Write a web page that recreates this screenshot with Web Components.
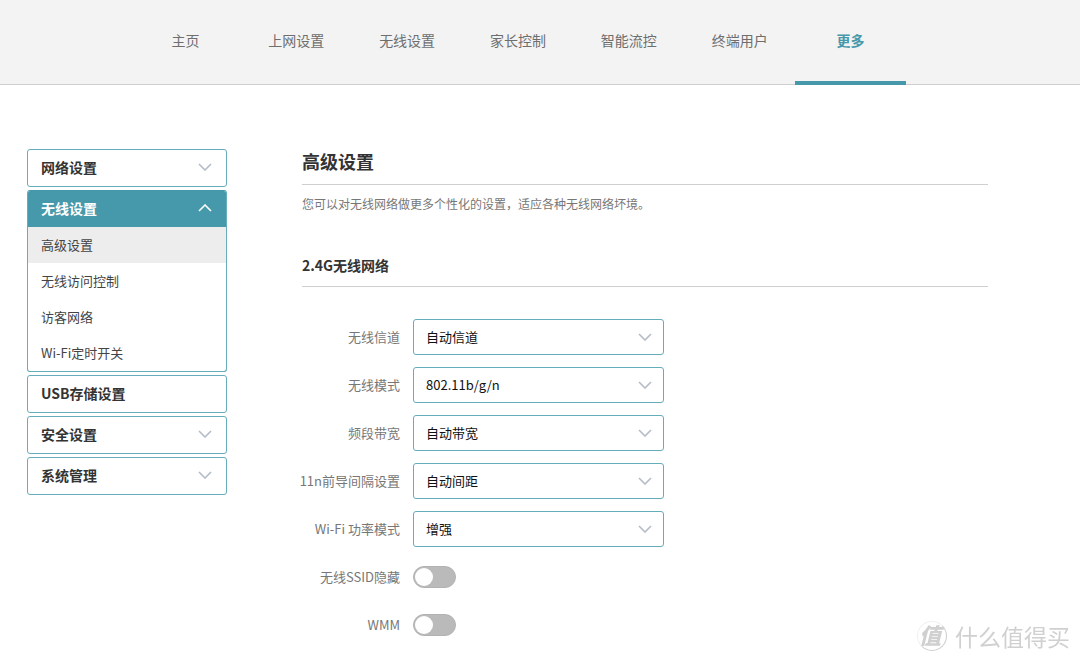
<!DOCTYPE html>
<html lang="zh-CN">
<head>
<meta charset="utf-8">
<meta name="viewport" content="width=device-width, initial-scale=1">
<title>高级设置</title>
<style>
:root {
  --accent: #4698ab;
  --edge: #66adbb;
  --rule: #cfcfcf;
  --chevron: #b4bcc6;
}
body {
  margin: 0;
  background: #fff;
  color: #333;
  font: 13px/20px "Noto Sans CJK SC", "Noto Sans", sans-serif;
}
</style>
</head>
<body>
<router-app></router-app>
<script>
const chevron = (flip) => `<svg class="chevron" width="14" height="8" viewBox="0 0 14 8" fill="none" aria-hidden="true"><path d="${flip ? 'M1 7L7 1L13 7' : 'M1 1L7 7L13 1'}" stroke="currentColor" stroke-width="1.6"/></svg>`;

class BaseElement extends HTMLElement {
  connectedCallback() {
    if (!this.shadowRoot) {
      this.attachShadow({ mode: 'open' }).innerHTML = `<style>*{box-sizing:border-box}${this.css()}</style>${this.html()}`;
    }
  }
}

class NavTab extends BaseElement {
  css() { return `
    :host { display: block; }
    a { display: flex; justify-content: center; height: 85px; padding-top: 30px; color: #6e6e6e; font-size: 14px; text-decoration: none; border-bottom: 4px solid transparent; white-space: nowrap; }
    :host([active]) a { color: var(--accent); font-weight: bold; border-color: var(--accent); }`; }
  html() { return `<a href="#"><slot></slot></a>`; }
}

class TopNav extends BaseElement {
  css() { return `
    :host { display: block; background: linear-gradient(var(--rule), var(--rule)) bottom / 100% 1px no-repeat #f3f3f3; }
    nav { display: grid; grid-template-columns: repeat(7, 1fr); margin: 0 174px 0 130px; }`; }
  html() { return `<nav><slot></slot></nav>`; }
}

class MenuGroup extends BaseElement {
  css() { return `
    :host { display: block; border: 1px solid var(--edge); border-radius: 3px; overflow: hidden; }
    button { display: flex; align-items: center; justify-content: space-between; width: 100%; height: 36px; padding: 0 14px 2px 13px; border: 0; background: none; color: #333; font: bold 14px/20px "Noto Sans CJK SC", sans-serif; }
    .chevron { color: var(--chevron); }
    :host([open]) { border-top-color: var(--accent); }
    :host([open]) button { background: var(--accent); color: #fff; }
    :host([open]) .chevron { color: #fff; }`; }
  html() {
    const open = this.hasAttribute('open');
    return `<button type="button"${this.hasAttribute('plain') ? '' : ` aria-expanded="${open}"`}>${this.getAttribute('label')}${this.hasAttribute('plain') ? '' : chevron(open)}</button><slot></slot>`;
  }
}

class MenuItem extends BaseElement {
  css() { return `
    :host { display: block; }
    a { display: block; padding: 8px 13px; color: #444; text-decoration: none; }
    :host([active]) a { background: #ededed; }`; }
  html() { return `<a href="#"><slot></slot></a>`; }
}

class SideMenu extends BaseElement {
  css() { return `
    :host { display: block; }
    nav { display: flex; flex-direction: column; gap: 3px; }`; }
  html() { return `<nav><slot></slot></nav>`; }
}

const rowCss = `
  :host { display: grid; grid-template-columns: 98px minmax(0, 251px); column-gap: 13px; align-items: center; min-height: 36px; }
  label { color: #777; white-space: nowrap; justify-self: end; }`;

class SelectRow extends BaseElement {
  css() { return `${rowCss}
    .box { display: grid; align-items: center; }
    select, .chevron { grid-area: 1 / 1; }
    select { appearance: none; width: 100%; height: 36px; padding: 0 32px 0 12px; border: 1px solid var(--edge); border-radius: 3px; background: #fff; color: #111; font: 13px/20px "Noto Sans CJK SC", sans-serif; }
    .chevron { justify-self: end; margin-right: 12px; color: var(--chevron); pointer-events: none; }`; }
  html() { return `<label for="field">${this.getAttribute('label')}</label><div class="box"><select id="field"><option>${this.getAttribute('value')}</option></select>${chevron(false)}</div>`; }
}

class SwitchRow extends BaseElement {
  css() { return `${rowCss}
    input { appearance: none; display: flex; align-items: center; width: 43px; height: 22px; margin: 0; padding: 0 1px; border: 1px solid #b2b2b2; border-radius: 11px; background: #bababa; }
    input::before { content: ""; width: 18px; height: 18px; border-radius: 50%; background: #fff; }
    input:checked { background: var(--accent); border-color: var(--accent); justify-content: flex-end; }`; }
  html() { return `<label for="field">${this.getAttribute('label')}</label><input id="field" type="checkbox" role="switch">`; }
}

class SettingsPanel extends BaseElement {
  css() { return `
    :host { display: block; }
    h1, h2 { margin: 0; border-bottom: 1px solid var(--rule); color: #333; }
    h1 { font-size: 18px; line-height: 24px; padding-bottom: 11px; }
    p { margin: 9px 0 41px; color: #777; font-size: 12px; }
    h2 { font-size: 14px; line-height: 20px; padding-bottom: 11px; }
    form { display: flex; flex-direction: column; gap: 12px; margin-top: 32px; }`; }
  html() { return `
    <h1>高级设置</h1>
    <p>您可以对无线网络做更多个性化的设置，适应各种无线网络坏境。</p>
    <h2>2.4G无线网络</h2>
    <form><slot></slot></form>`; }
}

class BrandMark extends BaseElement {
  css() { return `
    :host { position: fixed; right: 10px; bottom: 11px; display: flex; align-items: center; gap: 8px; color: #d0d0d0; pointer-events: none; }
    .seal { display: grid; place-items: center; width: 30px; height: 30px; border: 1px solid #f0f0f0; border-right-color: #ccc; border-bottom-color: #ccc; border-radius: 50%; font-size: 22px; line-height: 24px; font-weight: bold; font-style: italic; }
    .seal b { margin: 0 4px 4px 0; }
    .name { font-size: 23px; line-height: 30px; }`; }
  html() { return `<span class="seal"><b>值</b></span><span class="name">什么值得买</span>`; }
}

class RouterApp extends BaseElement {
  css() { return `
    :host { display: block; }
    .page { display: grid; grid-template-columns: 200px minmax(0, 1fr); column-gap: 75px; align-items: start; padding: 64px 92px 18px 27px; }`; }
  html() { return `
    <top-nav>
      <nav-tab>主页</nav-tab><nav-tab>上网设置</nav-tab><nav-tab>无线设置</nav-tab><nav-tab>家长控制</nav-tab><nav-tab>智能流控</nav-tab><nav-tab>终端用户</nav-tab><nav-tab active>更多</nav-tab>
    </top-nav>
    <div class="page">
      <side-menu>
        <menu-group label="网络设置"></menu-group>
        <menu-group label="无线设置" open>
          <menu-item active>高级设置</menu-item>
          <menu-item>无线访问控制</menu-item>
          <menu-item>访客网络</menu-item>
          <menu-item>Wi-Fi定时开关</menu-item>
        </menu-group>
        <menu-group label="USB存储设置" plain></menu-group>
        <menu-group label="安全设置"></menu-group>
        <menu-group label="系统管理"></menu-group>
      </side-menu>
      <main>
        <settings-panel>
          <select-row label="无线信道" value="自动信道"></select-row>
          <select-row label="无线模式" value="802.11b/g/n"></select-row>
          <select-row label="频段带宽" value="自动带宽"></select-row>
          <select-row label="11n前导间隔设置" value="自动间距"></select-row>
          <select-row label="Wi-Fi 功率模式" value="增强"></select-row>
          <switch-row label="无线SSID隐藏"></switch-row>
          <switch-row label="WMM"></switch-row>
        </settings-panel>
      </main>
    </div>
    <brand-mark></brand-mark>`; }
}

for (const [name, type] of [
  ['nav-tab', NavTab], ['top-nav', TopNav], ['menu-group', MenuGroup], ['menu-item', MenuItem],
  ['side-menu', SideMenu], ['select-row', SelectRow], ['switch-row', SwitchRow],
  ['settings-panel', SettingsPanel], ['brand-mark', BrandMark], ['router-app', RouterApp],
]) customElements.define(name, type);
</script>
</body>
</html>
